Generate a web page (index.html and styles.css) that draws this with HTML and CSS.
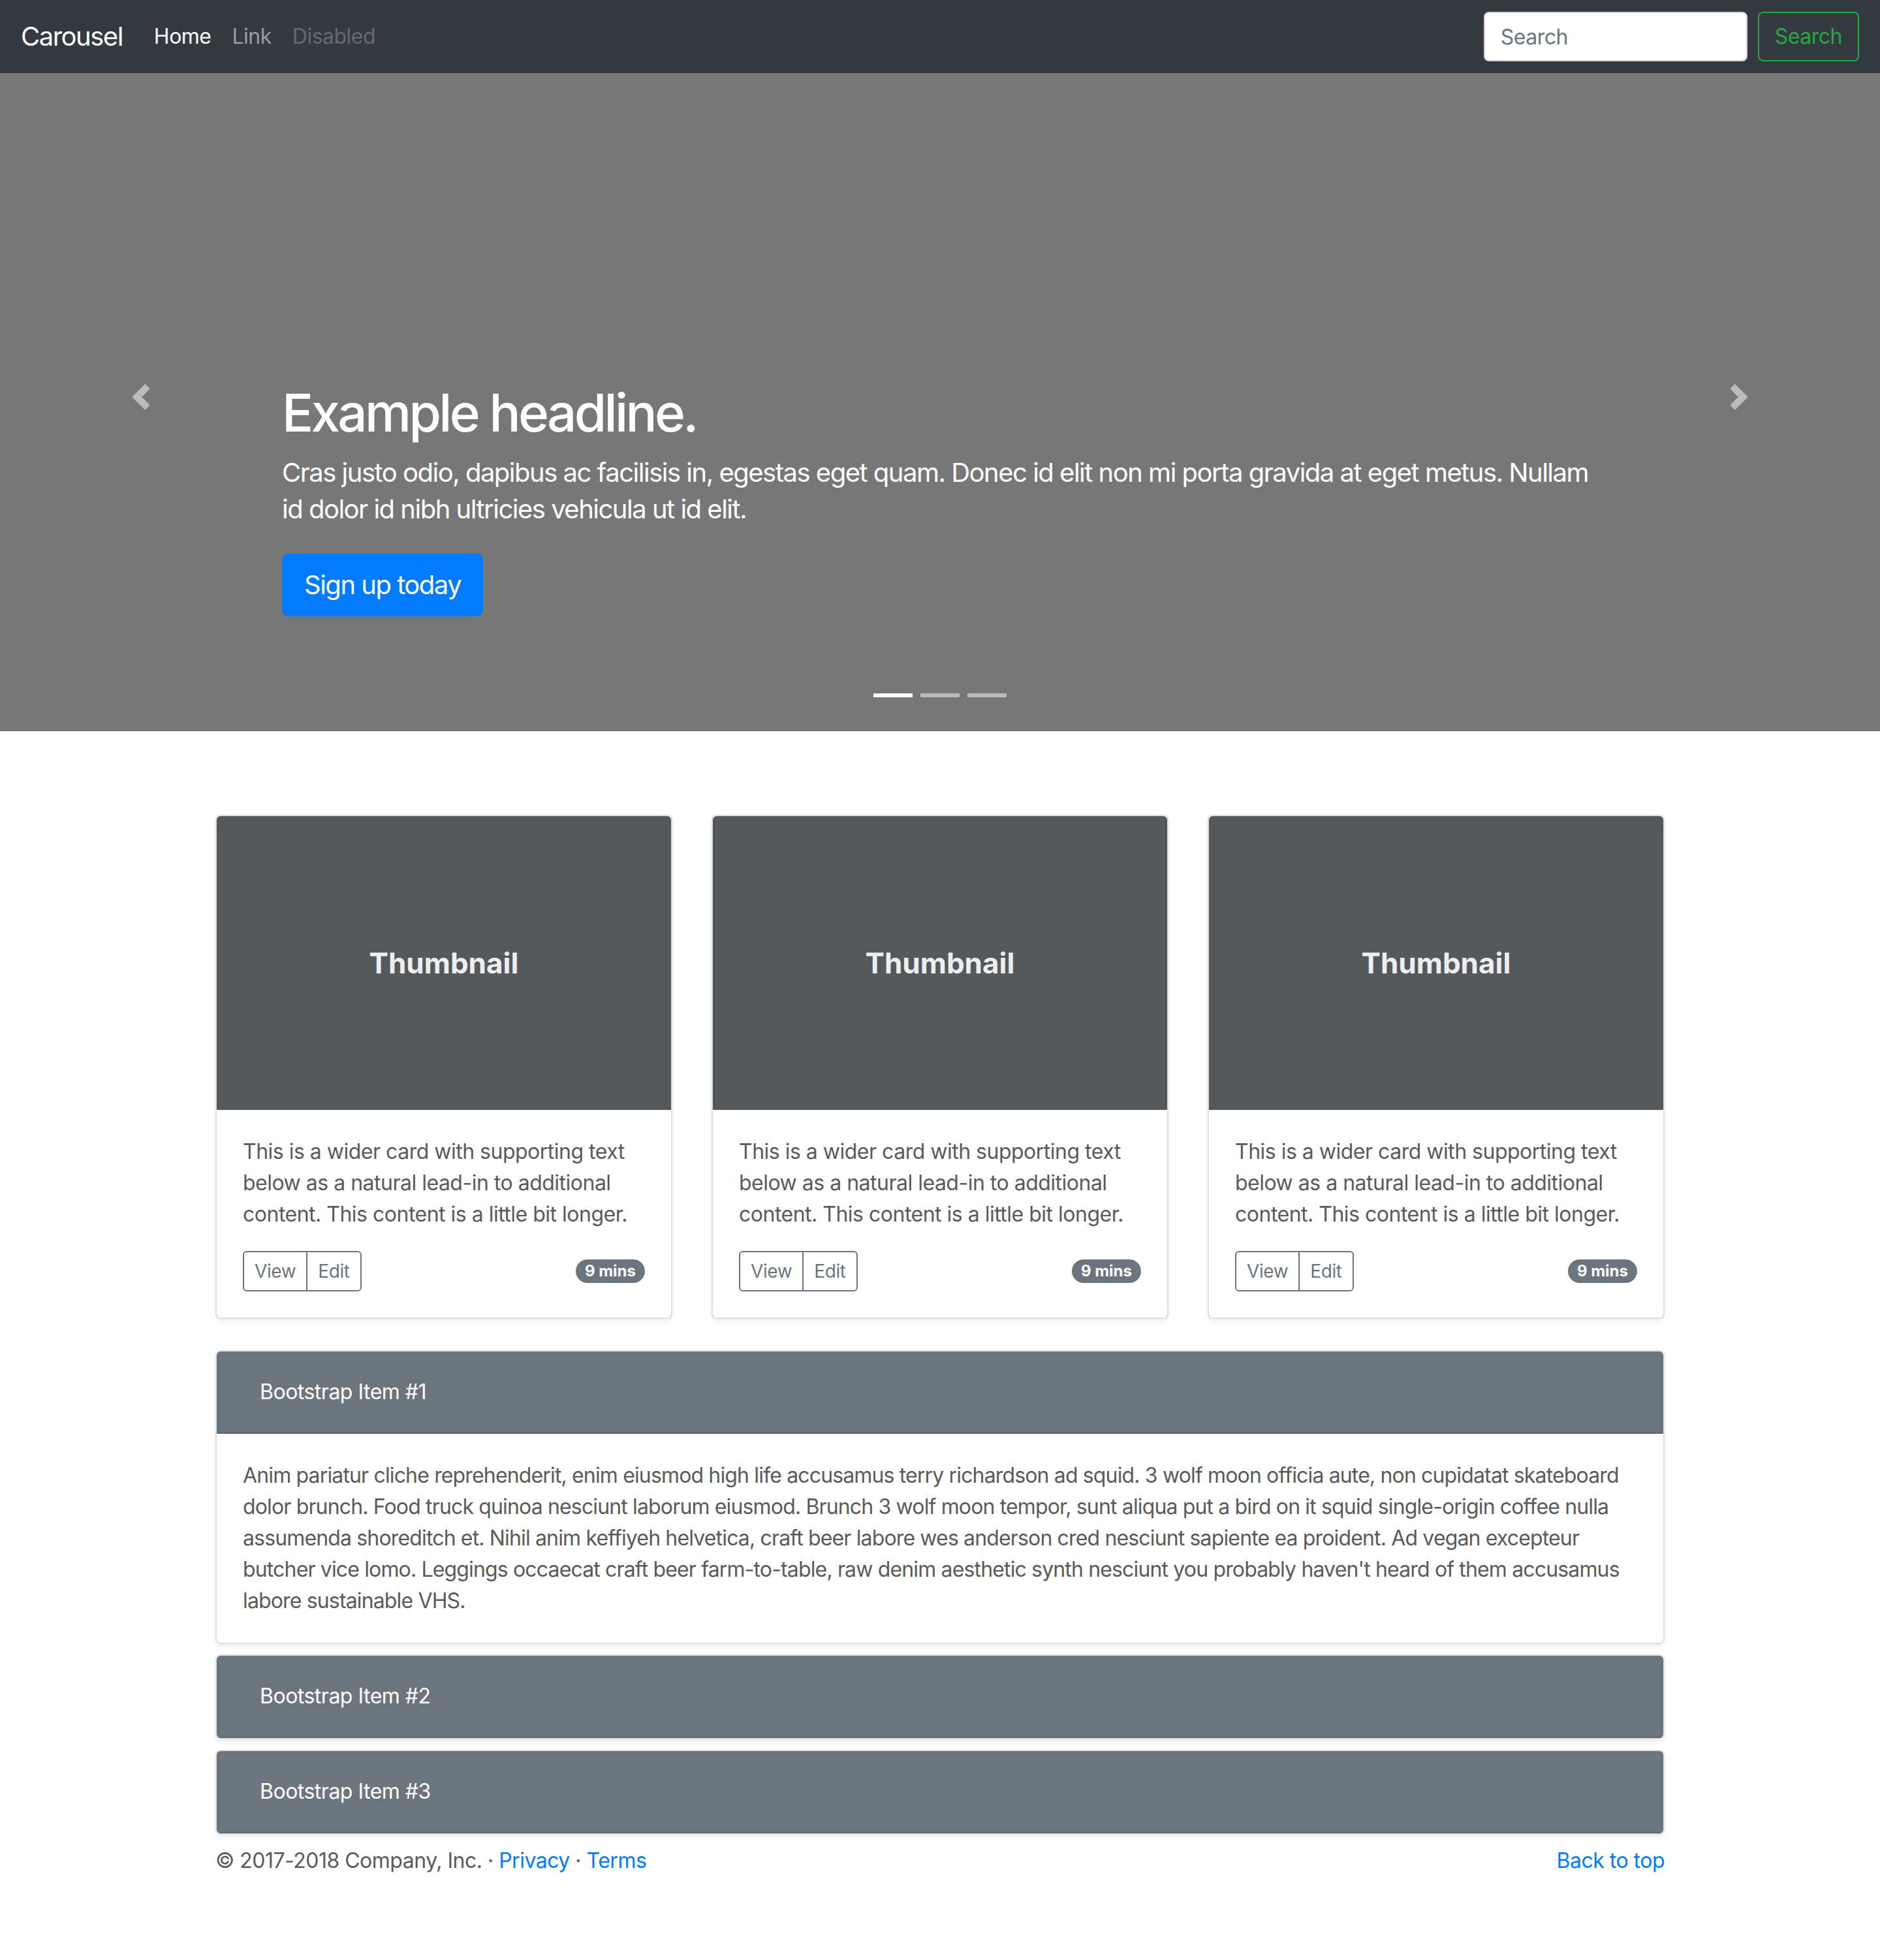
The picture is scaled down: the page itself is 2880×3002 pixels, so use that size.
FILE: index.html
```html
<!DOCTYPE html>
<html lang="en">
<head>
<meta charset="utf-8">
<title>Carousel Template</title>
<link rel="stylesheet" href="styles.css">
</head>
<body>
<header class="navbar">
  <a class="brand" href="#">Carousel</a>
  <nav class="nav">
    <a class="nav-link active" href="#">Home</a>
    <a class="nav-link" href="#">Link</a>
    <a class="nav-link disabled" href="#">Disabled</a>
  </nav>
  <form class="search">
    <input class="search-input" type="text" placeholder="Search">
    <button class="search-btn" type="button">Search</button>
  </form>
</header>

<section class="carousel">
  <a class="control control-prev" href="#">
    <svg class="control-icon" viewBox="0 0 8 8"><path d="M5.25 0l-4 4 4 4 1.5-1.5-2.5-2.5 2.5-2.5-1.5-1.5z"/></svg>
  </a>
  <div class="caption">
    <h1 class="caption-title">Example headline.</h1>
    <p class="caption-text">Cras justo odio, dapibus ac facilisis in, egestas eget quam. Donec id elit non mi porta gravida at eget metus. Nullam id dolor id nibh ultricies vehicula ut id elit.</p>
    <div class="caption-action"><a class="btn-primary" href="#">Sign up today</a></div>
  </div>
  <a class="control control-next" href="#">
    <svg class="control-icon" viewBox="0 0 8 8"><path d="M2.75 0l-1.5 1.5 2.5 2.5-2.5 2.5 1.5 1.5 4-4-4-4z"/></svg>
  </a>
  <ol class="indicators">
    <li class="indicator active"></li>
    <li class="indicator"></li>
    <li class="indicator"></li>
  </ol>
</section>

<main class="container">
  <div class="cards">
    <div class="card">
      <div class="thumb">Thumbnail</div>
      <div class="card-body">
        <p class="card-text">This is a wider card with supporting text below as a natural lead-in to additional content. This content is a little bit longer.</p>
        <div class="card-foot">
          <div class="btn-group"><button class="btn-sm" type="button">View</button><button class="btn-sm" type="button">Edit</button></div>
          <span class="badge">9 mins</span>
        </div>
      </div>
    </div>
    <div class="card">
      <div class="thumb">Thumbnail</div>
      <div class="card-body">
        <p class="card-text">This is a wider card with supporting text below as a natural lead-in to additional content. This content is a little bit longer.</p>
        <div class="card-foot">
          <div class="btn-group"><button class="btn-sm" type="button">View</button><button class="btn-sm" type="button">Edit</button></div>
          <span class="badge">9 mins</span>
        </div>
      </div>
    </div>
    <div class="card">
      <div class="thumb">Thumbnail</div>
      <div class="card-body">
        <p class="card-text">This is a wider card with supporting text below as a natural lead-in to additional content. This content is a little bit longer.</p>
        <div class="card-foot">
          <div class="btn-group"><button class="btn-sm" type="button">View</button><button class="btn-sm" type="button">Edit</button></div>
          <span class="badge">9 mins</span>
        </div>
      </div>
    </div>
  </div>

  <div class="accordion">
    <div class="acc-card">
      <div class="acc-header"><button class="acc-btn" type="button">Bootstrap Item #1</button></div>
      <div class="acc-body">Anim pariatur cliche reprehenderit, enim eiusmod high life accusamus terry richardson ad squid. 3 wolf moon officia aute, non cupidatat skateboard dolor brunch. Food truck quinoa nesciunt laborum eiusmod. Brunch 3 wolf moon tempor, sunt aliqua put a bird on it squid single-origin coffee nulla assumenda shoreditch et. Nihil anim keffiyeh helvetica, craft beer labore wes anderson cred nesciunt sapiente ea proident. Ad vegan excepteur butcher vice lomo. Leggings occaecat craft beer farm-to-table, raw denim aesthetic synth nesciunt you probably haven't heard of them accusamus labore sustainable VHS.</div>
    </div>
    <div class="acc-card">
      <div class="acc-header"><button class="acc-btn" type="button">Bootstrap Item #2</button></div>
    </div>
    <div class="acc-card">
      <div class="acc-header"><button class="acc-btn" type="button">Bootstrap Item #3</button></div>
    </div>
  </div>
</main>

<footer class="container footer">
  <p class="footer-text">&copy; 2017-2018 Company, Inc. &middot; <a href="#">Privacy</a> &middot; <a href="#">Terms</a></p>
  <p class="footer-text"><a href="#">Back to top</a></p>
</footer>
</body>
</html>
```

FILE: styles.css
```css
* { box-sizing: border-box; }

html, body { margin: 0; }

body {
  font-family: Inter, "Liberation Sans", sans-serif;
  font-size: 32px;
  line-height: 1.5;
  letter-spacing: -0.5px;
  color: #5a5a5a;
  background: #fff;
  padding-bottom: 96px;
}

a { color: #007bff; text-decoration: none; }

/* Navbar */
.navbar {
  height: 112px;
  background: #343a40;
  display: flex;
  align-items: center;
  padding: 0 32px;
}
.brand {
  color: #fff;
  font-size: 40px;
  line-height: 60px;
  letter-spacing: -1.5px;
  margin-right: 32px;
}
.nav { display: flex; }
.nav-link {
  padding: 0 16px;
  color: rgba(255,255,255,.5);
  font-size: 32px;
  line-height: 48px;
}
.nav-link.active { color: #fff; }
.nav-link.disabled { color: rgba(255,255,255,.25); }
.search { margin-left: auto; display: flex; }
.search-input {
  width: 404px;
  height: 76px;
  padding: 12px 24px;
  font: inherit;
  font-size: 32px;
  letter-spacing: -0.5px;
  color: #495057;
  background: #fff;
  border: 2px solid #ced4da;
  border-radius: 8px;
  margin-right: 16px;
  outline: none;
}
.search-input::placeholder { color: #6c757d; }
.search-btn {
  height: 76px;
  padding: 12px 24px;
  font: inherit;
  font-size: 32px;
  line-height: 48px;
  letter-spacing: -0.5px;
  color: #28a745;
  background: transparent;
  border: 2px solid #28a745;
  border-radius: 8px;
}

/* Carousel */
.carousel {
  position: relative;
  height: 1008px;
  background: #777;
}
.control {
  position: absolute;
  top: 0;
  bottom: 16px;
  width: 432px;
  display: flex;
  align-items: center;
  justify-content: center;
  opacity: .5;
}
.control-prev { left: 0; }
.control-next { right: 0; }
.control-icon { width: 40px; height: 40px; fill: #fff; }
.caption {
  position: absolute;
  left: 432px;
  right: 432px;
  bottom: 96px;
  padding: 40px 0;
  color: #fff;
  text-align: left;
}
.caption-title {
  margin: 0 0 16px;
  font-size: 80px;
  font-weight: 500;
  line-height: 1.2;
  letter-spacing: -3.7px;
}
.caption-text {
  margin: 0 0 40px;
  font-size: 40px;
  line-height: 1.4;
  letter-spacing: -1.5px;
}
.caption-action { display: flex; margin: 0 0 40px; }
.btn-primary {
  display: inline-block;
  padding: 16px 32px;
  font-size: 40px;
  line-height: 60px;
  letter-spacing: -1.5px;
  color: #fff;
  background: #007bff;
  border: 2px solid #007bff;
  border-radius: 10px;
}
.indicators {
  position: absolute;
  left: 0;
  right: 0;
  bottom: 0;
  margin: 0 0 32px;
  padding: 0;
  list-style: none;
  display: flex;
  justify-content: center;
}
.indicator {
  width: 60px;
  height: 46px;
  margin: 0 6px;
  border-top: 20px solid transparent;
  border-bottom: 20px solid transparent;
  background: #fff;
  background-clip: padding-box;
  opacity: .5;
}
.indicator.active { opacity: 1; }

/* Content */
.container {
  width: 2220px;
  margin: 0 auto;
}
main.container { margin-top: 128px; }

.cards {
  display: grid;
  grid-template-columns: repeat(3, 1fr);
  column-gap: 60px;
}
.card {
  border: 2px solid rgba(0,0,0,.125);
  border-radius: 8px;
  box-shadow: 0 4px 8px rgba(0,0,0,.075);
  overflow: hidden;
  margin-bottom: 48px;
  background: #fff;
}
.thumb {
  height: 450px;
  background: #55595c;
  color: #eceeef;
  display: flex;
  align-items: center;
  justify-content: center;
  font-size: 44px;
  font-weight: 700;
  letter-spacing: 0;
}
.card-body { padding: 40px; }
.card-text { margin: 0 0 32px; }
.card-foot {
  display: flex;
  justify-content: space-between;
  align-items: center;
}
.btn-group { display: inline-flex; }
.btn-sm {
  font: inherit;
  font-size: 28px;
  line-height: 42px;
  letter-spacing: -0.4px;
  padding: 8px 16px;
  color: #6c757d;
  background: transparent;
  border: 2px solid #6c757d;
}
.btn-sm:first-child { border-radius: 6px 0 0 6px; }
.btn-sm + .btn-sm { margin-left: -2px; border-radius: 0 6px 6px 0; }
.badge {
  display: inline-block;
  padding: 6px 14px;
  font-size: 24px;
  font-weight: 700;
  line-height: 1;
  letter-spacing: 0;
  color: #fff;
  background: #6c757d;
  border-radius: 20px;
}

.acc-card {
  border: 2px solid rgba(0,0,0,.125);
  border-radius: 8px;
  overflow: hidden;
  margin-bottom: 16px;
  box-shadow: 0 4px 8px rgba(0,0,0,.075);
}
.acc-header {
  background: #6c757d;
  padding: 24px 40px;
  border-bottom: 2px solid rgba(0,0,0,.125);
}
.acc-btn {
  font: inherit;
  font-size: 32px;
  line-height: 48px;
  letter-spacing: -0.5px;
  padding: 12px 24px;
  color: #fff;
  background: transparent;
  border: 2px solid transparent;
  text-align: left;
}
.acc-body {
  padding: 40px;
  letter-spacing: -0.85px;
}

.footer {
  display: flex;
  justify-content: space-between;
}
.footer-text { margin: 0 0 32px; }
```
